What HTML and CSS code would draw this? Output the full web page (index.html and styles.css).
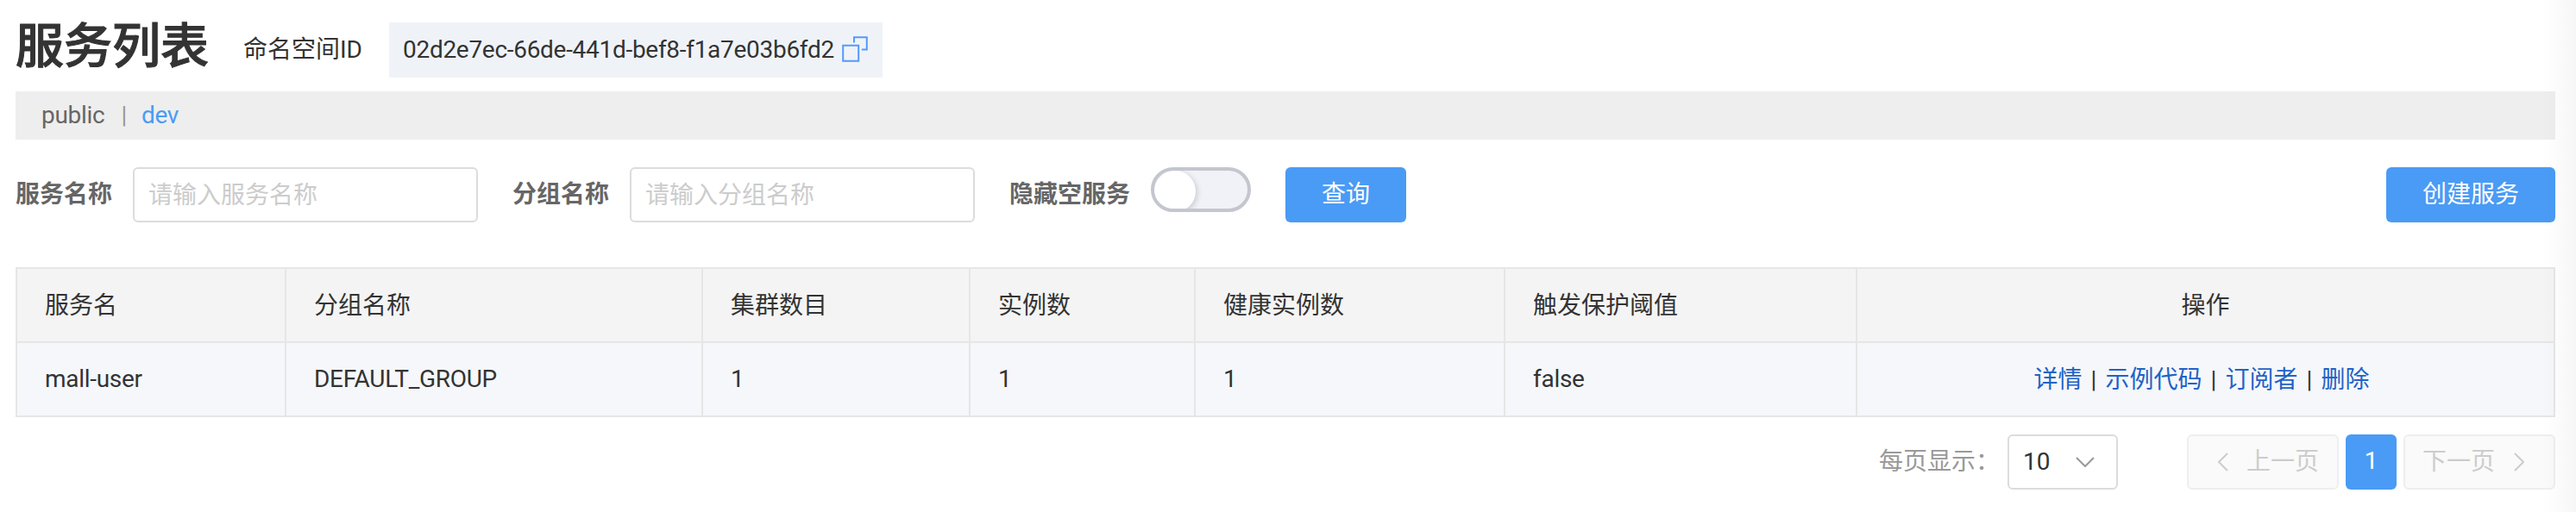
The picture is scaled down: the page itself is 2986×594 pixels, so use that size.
FILE: index.html
```html
<!DOCTYPE html>
<html lang="zh-CN">
<head>
<meta charset="utf-8">
<title>服务列表</title>
<link rel="stylesheet" href="styles.css">
</head>
<body>
<main class="page">
  <header class="heading">
    <h1 class="title">服务列表</h1>
    <span class="ns-label">命名空间ID</span>
    <span class="ns-id">
      <span class="ns-text latin">02d2e7ec-66de-441d-bef8-f1a7e03b6fd2</span>
      <svg class="copy" viewBox="0 0 30 30"><path d="M1.2 10.7H19.2V28.8H1.2Z"/><path d="M14 7.5V1.2H28.8V15.5H22.8"/></svg>
    </span>
  </header>
  <nav class="namespaces latin">
    <a>public</a><span class="bar">|</span><a class="current">dev</a>
  </nav>
  <form class="filters">
    <label>服务名称</label>
    <input class="field" type="text" placeholder="请输入服务名称">
    <label class="label-group">分组名称</label>
    <input class="field" type="text" placeholder="请输入分组名称">
    <label class="label-hide">隐藏空服务</label>
    <span class="switch"><span class="knob"></span></span>
    <button class="btn search" type="button">查询</button>
    <button class="btn create" type="button">创建服务</button>
  </form>
  <section class="table">
    <div class="row head">
      <div>服务名</div><div>分组名称</div><div>集群数目</div><div>实例数</div><div>健康实例数</div><div>触发保护阈值</div><div class="center">操作</div>
    </div>
    <div class="row">
      <div class="latin">mall-user</div><div class="latin">DEFAULT_GROUP</div><div>1</div><div>1</div><div>1</div><div class="latin">false</div>
      <div class="center actions"><a>详情</a><span>|</span><a>示例代码</a><span>|</span><a>订阅者</a><span>|</span><a>删除</a></div>
    </div>
  </section>
  <footer class="pagination">
    <span class="size-label">每页显示：</span>
    <span class="select">10<svg class="down" viewBox="0 0 22 12"><path d="M1 1L11 11L21 1"/></svg></span>
    <span class="page-btn prev"><svg class="arrow" viewBox="0 0 12 22"><path d="M11 1L1 11L11 21"/></svg>上一页</span>
    <span class="page-num">1</span>
    <span class="page-btn next">下一页<svg class="arrow" viewBox="0 0 12 22"><path d="M1 1L11 11L1 21"/></svg></span>
  </footer>
</main>
</body>
</html>
```
FILE: styles.css
```css
* { box-sizing: border-box; }
body {
  margin: 0;
  background: #fff;
  color: #333;
  font: 28px/36px Roboto, "Noto Sans CJK SC", sans-serif;
}
svg { fill: none; flex: none; }
.latin { letter-spacing: -.29px; }
.page { position: relative; height: 594px; padding: 0 24px 0 18px; overflow: hidden; }
.page::after {
  content: "";
  position: absolute;
  top: 0; right: 0; bottom: 0;
  width: 40px;
  background: linear-gradient(to right, rgba(0,0,0,0), rgba(0,0,0,.01) 40%, rgba(0,0,0,.035));
  pointer-events: none;
}
.heading { display: flex; height: 106px; padding-top: 26px; }
.title {
  margin: -12px 0 0; width: 264px; font-size: 56px; line-height: 80px; font-weight: 500;
  -webkit-text-stroke: 1px #333;
}
.ns-label { width: 169px; line-height: 64px; }
.ns-id {
  display: flex; width: 572px; height: 64px; padding-left: 16px;
  line-height: 64px; background: #eff3f8;
}
.ns-text { width: 509px; white-space: nowrap; }
.copy { width: 30px; height: 30px; margin-top: 16px; stroke: #5599fb; stroke-width: 2; }
.namespaces {
  display: flex; height: 56px; padding-left: 30px;
  background: #eee; color: #666; line-height: 56px;
}
.bar { margin: 0 17px 0 19px; color: #999; }
.current { color: #4a9bf5; }
.filters { display: flex; height: 148px; padding-top: 32px; line-height: 64px; }
.filters label { width: 136px; color: #666; font-weight: 700; white-space: nowrap; }
.filters .label-group { margin-left: 40px; }
.filters .label-hide { width: 164px; margin-left: 40px; }
.field {
  width: 400px; height: 64px; margin: 0; padding: 0 16px;
  border: 2px solid #dcdcdc; border-radius: 6px; font: inherit; line-height: normal;
}
.field::placeholder { color: #ccc; opacity: 1; }
.switch {
  width: 116px; height: 52px; border: 4px solid #c4c6cf;
  border-radius: 26px; background: #f1f2f7; overflow: hidden;
}
.knob {
  display: block; width: 48px; height: 48px; border-radius: 50%;
  background: #fff; box-shadow: 2px 2px 6px rgba(0,0,0,.16);
}
.btn {
  height: 64px; border: 0; border-radius: 6px; padding: 0;
  background: #4a9bf5; color: #fff; font: inherit;
}
.search { width: 140px; margin-left: 40px; }
.create { width: 196px; margin-left: auto; }
.table { border: solid #e6e6e6; border-width: 2px 0 0 2px; }
.row {
  display: grid;
  grid-template-columns: 312px 483px 310px 261px 359px 408px 1fr;
  grid-template-rows: 86px;
  height: 86px; line-height: 84px; background: #f5f7fa;
}
.row > div { padding-left: 32px; border: solid #e6e6e6; border-width: 0 2px 2px 0; }
.head { background: #f4f4f4; }
.head > div { padding-top: 1px; }
.row > .center { display: flex; justify-content: center; padding: 1px 0 0; }
.row > .actions { padding-right: 9px; }
.actions a { color: #2262c6; }
.actions span { width: 27px; text-align: center; }
.pagination { display: flex; justify-content: flex-end; height: 64px; margin-top: 20px; line-height: 62px; }
.size-label { width: 149px; color: #999; line-height: 64px; }
.select {
  display: flex; align-items: center; width: 128px; margin-right: 80px;
  padding-left: 16px; border: 2px solid #dcdcdc; border-radius: 6px;
}
.down { width: 22px; height: 12px; margin-left: 30px; stroke: #999; stroke-width: 2; }
.page-btn {
  display: flex; align-items: center; width: 176px;
  border: 2px solid #eee; border-radius: 6px; background: #fafafa; color: #ccc;
}
.arrow { width: 12px; height: 22px; stroke: #ccc; stroke-width: 2; }
.prev { padding-left: 34px; }
.prev .arrow { margin-right: 21px; }
.next { padding-left: 20px; }
.next .arrow { margin-left: 22px; }
.page-num {
  width: 59px; margin: 0 8px; border-radius: 6px;
  background: #4a9bf5; color: #fff; text-align: center;
}
```
